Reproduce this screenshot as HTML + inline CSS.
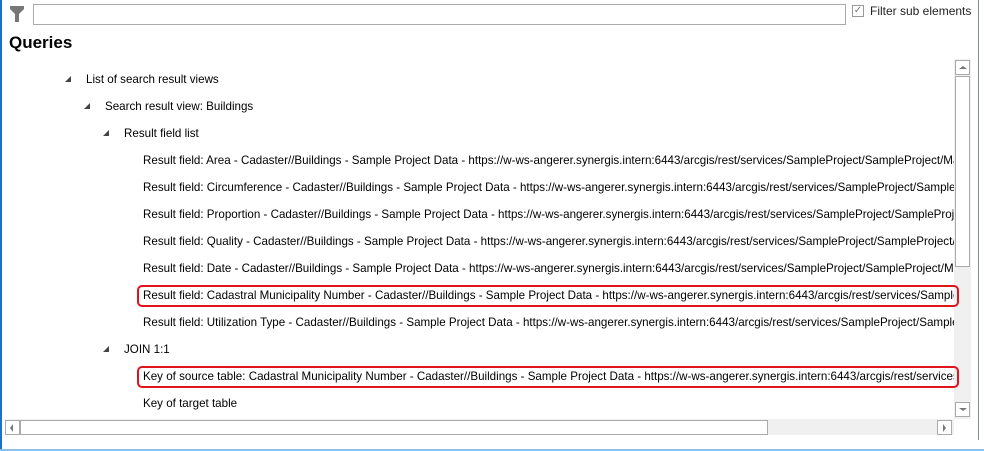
<!DOCTYPE html><html><head><style>
body{margin:0;width:984px;height:451px;background:#fff;position:relative;overflow:hidden;font-family:"Liberation Sans",sans-serif;font-size:12px;color:#000}
.a{position:absolute;white-space:nowrap}
.t{position:absolute;width:0;height:0;border-left:6px solid transparent;border-bottom:6px solid #444}
.row{position:absolute;white-space:nowrap;line-height:14px;font-size:11.6px}
.clip{position:absolute;left:0;top:60px;width:962px;height:359px;overflow:hidden}
.box{position:absolute;border:2px solid #e0141c;border-radius:5px}
</style></head><body>
<div class="a" style="left:0;top:0;width:2px;height:451px;background:#1a73c8"></div>
<div class="a" style="left:978px;top:0;width:1px;height:440px;background:#7a8ea8"></div>
<div class="a" style="left:0;top:449px;width:984px;height:2px;background:#8cc0e8"></div>
<svg class="a" style="left:10px;top:6px" width="14" height="16"><path d="M0 0h14v3l-5 5v8h-4v-8l-5-5z" fill="#777"/></svg>
<div class="a" style="left:33px;top:4px;width:813px;height:21px;border:1px solid #aaa;box-sizing:border-box"></div>
<div class="a" style="left:852px;top:5px;width:12px;height:12px;border:1px solid #999;box-sizing:border-box;font-size:10px;line-height:10px;color:#777;text-align:center">✓</div>
<div class="a" style="left:870px;top:4px;font-size:12px;color:#222">Filter sub elements</div>
<div class="a" style="left:9px;top:33px;font-size:17px;font-weight:bold">Queries</div>
<div class="a" style="left:954px;top:59px;width:17px;height:360px;background:#f0f0f0"></div>
<div class="a" style="left:955px;top:60px;width:15px;height:15px;border:1px solid #aaa;box-sizing:border-box;background:#fff"><div class="a" style="left:3px;top:5px;border-left:4px solid transparent;border-right:4px solid transparent;border-bottom:3px solid #777"></div></div>
<div class="a" style="left:955px;top:76px;width:15px;height:191px;border:1px solid #aaa;box-sizing:border-box;background:#fff"></div>
<div class="a" style="left:955px;top:402px;width:15px;height:15px;border:1px solid #aaa;box-sizing:border-box;background:#fff"><div class="a" style="left:3px;top:5px;border-left:4px solid transparent;border-right:4px solid transparent;border-top:3px solid #777"></div></div>
<div class="clip">
<div class="t" style="left:65px;top:16px"></div><div class="row" style="left:86px;top:13px">List of search result views</div>
<div class="t" style="left:84px;top:43px"></div><div class="row" style="left:105px;top:40px">Search result view: Buildings</div>
<div class="t" style="left:103px;top:70px"></div><div class="row" style="left:124px;top:67px">Result field list</div>
<div style="position:absolute;left:0;top:0;width:954px;height:359px;overflow:hidden">
<div class="row" style="left:143px;top:94px">Result field: Area - Cadaster//Buildings - Sample Project Data - https://w-ws-angerer.synergis.intern:6443/arcgis/rest/services/SampleProject/SampleProject/MapServer</div>
<div class="row" style="left:143px;top:121px">Result field: Circumference - Cadaster//Buildings - Sample Project Data - https://w-ws-angerer.synergis.intern:6443/arcgis/rest/services/SampleProject/SampleProject/MapServer</div>
<div class="row" style="left:143px;top:148px">Result field: Proportion - Cadaster//Buildings - Sample Project Data - https://w-ws-angerer.synergis.intern:6443/arcgis/rest/services/SampleProject/SampleProject/MapServer</div>
<div class="row" style="left:143px;top:175px">Result field: Quality - Cadaster//Buildings - Sample Project Data - https://w-ws-angerer.synergis.intern:6443/arcgis/rest/services/SampleProject/SampleProject/MapServer</div>
<div class="row" style="left:143px;top:202px">Result field: Date - Cadaster//Buildings - Sample Project Data - https://w-ws-angerer.synergis.intern:6443/arcgis/rest/services/SampleProject/SampleProject/MapServer</div>
<div class="row" style="left:143px;top:229px">Result field: Cadastral Municipality Number - Cadaster//Buildings - Sample Project Data - https://w-ws-angerer.synergis.intern:6443/arcgis/rest/services/SampleProject/SampleProject</div>
<div class="row" style="left:143px;top:256px">Result field: Utilization Type - Cadaster//Buildings - Sample Project Data - https://w-ws-angerer.synergis.intern:6443/arcgis/rest/services/SampleProject/SampleProject</div>
<div class="row" style="left:143px;top:310px">Key of source table: Cadastral Municipality Number - Cadaster//Buildings - Sample Project Data - https://w-ws-angerer.synergis.intern:6443/arcgis/rest/services</div>
</div>
<div class="box" style="left:137px;top:225px;width:818px;height:18px"></div>
<div class="t" style="left:103px;top:286px"></div><div class="row" style="left:124px;top:283px">JOIN 1:1</div>
<div class="box" style="left:137px;top:306px;width:818px;height:18px"></div>
<div class="row" style="left:143px;top:337px">Key of target table</div>
</div>
<div class="a" style="left:5px;top:419px;width:949px;height:16px;background:#f0f0f0"></div>
<div class="a" style="left:5px;top:420px;width:15px;height:15px;border:1px solid #aaa;box-sizing:border-box;background:#fff"><div class="a" style="left:4px;top:3px;border-top:4px solid transparent;border-bottom:4px solid transparent;border-right:3px solid #777"></div></div>
<div class="a" style="left:20px;top:420px;width:748px;height:15px;border:1px solid #aaa;box-sizing:border-box;background:#fff"></div>
<div class="a" style="left:937px;top:420px;width:15px;height:15px;border:1px solid #aaa;box-sizing:border-box;background:#fff"><div class="a" style="left:5px;top:3px;border-top:4px solid transparent;border-bottom:4px solid transparent;border-left:3px solid #777"></div></div>
</body></html>
